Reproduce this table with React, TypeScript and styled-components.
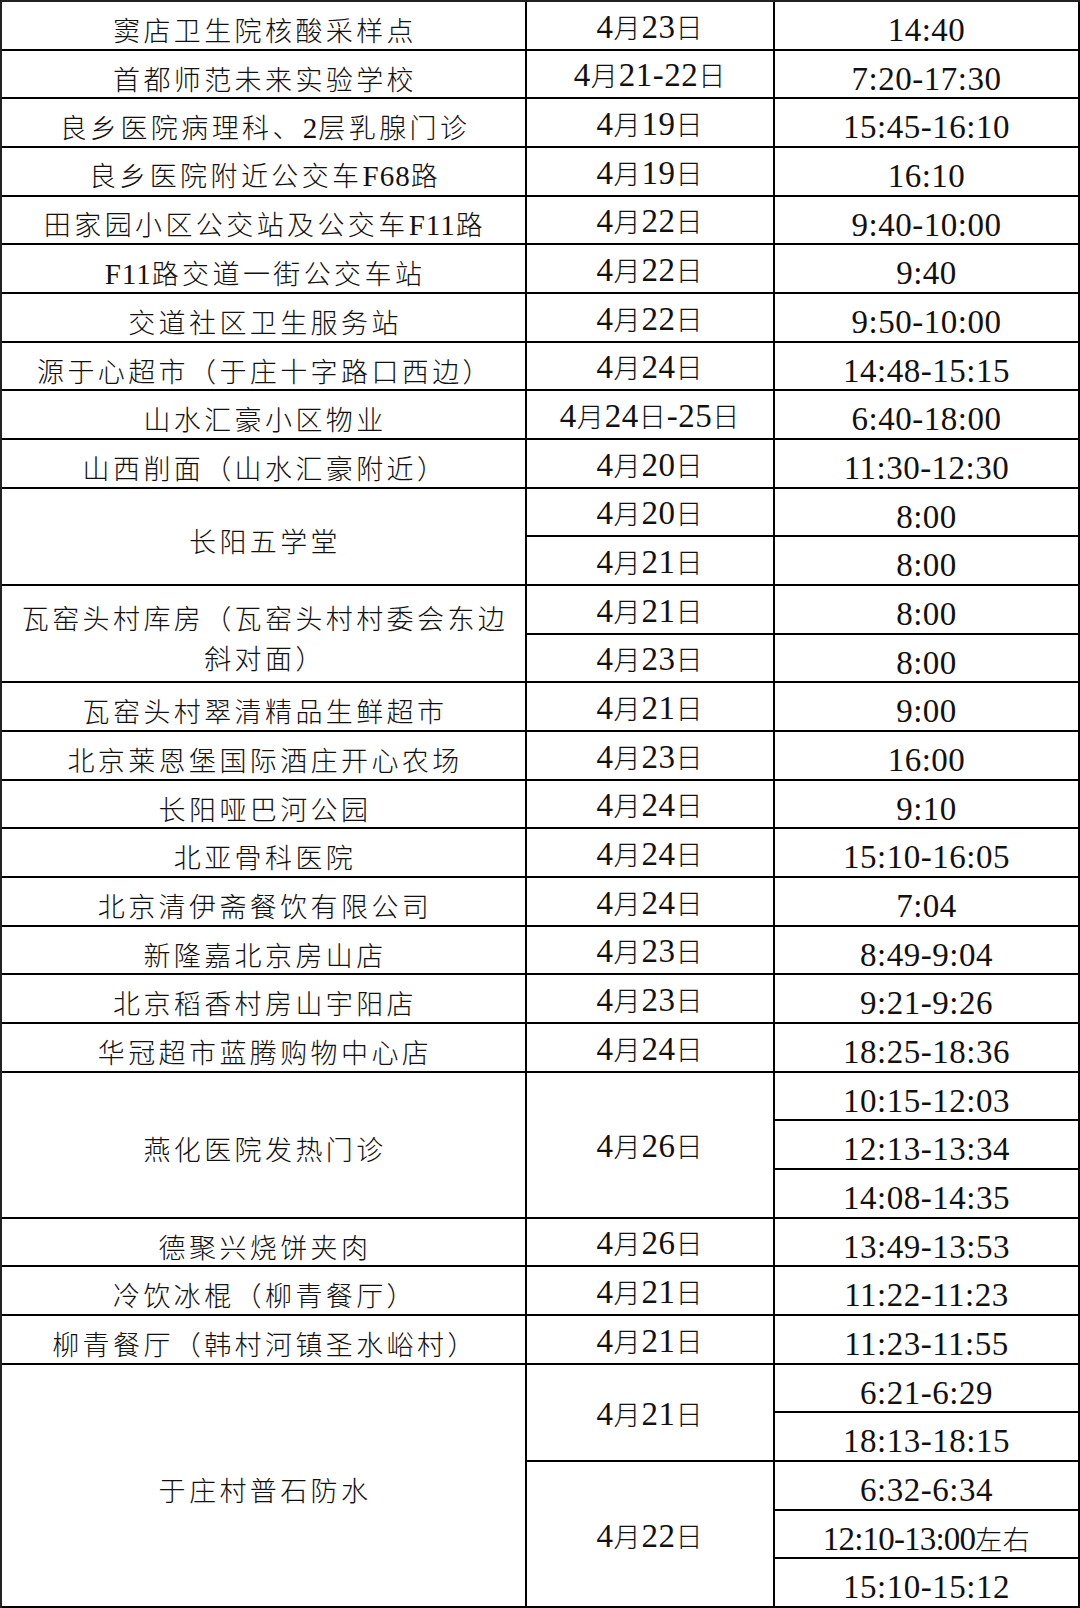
import React from 'react';
import styled, { createGlobalStyle, css } from 'styled-components';

type DateGroup = { date: string; times: string[] };
type Site = { place: string; dates: DateGroup[] };

const one = (place: string, date: string, time: string): Site => ({
  place,
  dates: [{ date, times: [time] }],
});

const sites: Site[] = [
  one('窦店卫生院核酸采样点', '4月23日', '14:40'),
  one('首都师范未来实验学校', '4月21-22日', '7:20-17:30'),
  one('良乡医院病理科、2层乳腺门诊', '4月19日', '15:45-16:10'),
  one('良乡医院附近公交车F68路', '4月19日', '16:10'),
  one('田家园小区公交站及公交车F11路', '4月22日', '9:40-10:00'),
  one('F11路交道一街公交车站', '4月22日', '9:40'),
  one('交道社区卫生服务站', '4月22日', '9:50-10:00'),
  one('源于心超市（于庄十字路口西边）', '4月24日', '14:48-15:15'),
  one('山水汇豪小区物业', '4月24日-25日', '6:40-18:00'),
  one('山西削面（山水汇豪附近）', '4月20日', '11:30-12:30'),
  {
    place: '长阳五学堂',
    dates: [
      { date: '4月20日', times: ['8:00'] },
      { date: '4月21日', times: ['8:00'] },
    ],
  },
  {
    place: '瓦窑头村库房（瓦窑头村村委会东边斜对面）',
    dates: [
      { date: '4月21日', times: ['8:00'] },
      { date: '4月23日', times: ['8:00'] },
    ],
  },
  one('瓦窑头村翠清精品生鲜超市', '4月21日', '9:00'),
  one('北京莱恩堡国际酒庄开心农场', '4月23日', '16:00'),
  one('长阳哑巴河公园', '4月24日', '9:10'),
  one('北亚骨科医院', '4月24日', '15:10-16:05'),
  one('北京清伊斋餐饮有限公司', '4月24日', '7:04'),
  one('新隆嘉北京房山店', '4月23日', '8:49-9:04'),
  one('北京稻香村房山宇阳店', '4月23日', '9:21-9:26'),
  one('华冠超市蓝腾购物中心店', '4月24日', '18:25-18:36'),
  {
    place: '燕化医院发热门诊',
    dates: [{ date: '4月26日', times: ['10:15-12:03', '12:13-13:34', '14:08-14:35'] }],
  },
  one('德聚兴烧饼夹肉', '4月26日', '13:49-13:53'),
  one('冷饮冰棍（柳青餐厅）', '4月21日', '11:22-11:23'),
  one('柳青餐厅（韩村河镇圣水峪村）', '4月21日', '11:23-11:55'),
  {
    place: '于庄村普石防水',
    dates: [
      { date: '4月21日', times: ['6:21-6:29', '18:13-18:15'] },
      { date: '4月22日', times: ['6:32-6:34', '12:10-13:00左右', '15:10-15:12'] },
    ],
  },
];

const rowsOf = (s: Site) => s.dates.reduce((m, d) => m + d.times.length, 0);
const totalRows = sites.reduce((n, s) => n + rowsOf(s), 0);

const isLatin = (s: string) => /^[\x20-\x7E]+$/.test(s);

// latin runs (digits, colons, dashes) are set in a serif face, the rest in CJK
const mixed = (text: string) =>
  text.split(/([\x20-\x7E]+)/).map((part, i) =>
    isLatin(part) ? <Latin key={i}>{part}</Latin> : part,
  );

const App = () => (
  <>
    <GlobalStyle />
    <Sheet style={{ gridTemplateRows: `repeat(${totalRows}, 1fr)` }}>
      {sites.map((site) => (
        <React.Fragment key={site.place}>
          <PlaceCell $span={rowsOf(site)}>
            <Text>{mixed(site.place)}</Text>
          </PlaceCell>
          {site.dates.map((d) => (
            <React.Fragment key={d.date}>
              <DateCell $span={d.times.length}>
                <Text>{mixed(d.date)}</Text>
              </DateCell>
              {d.times.map((t) => (
                // a time with a note after it is squeezed to fit, as in the source sheet
                <TimeCell key={t} $span={1} $tight={!isLatin(t)}>
                  <Text>{mixed(t)}</Text>
                </TimeCell>
              ))}
            </React.Fragment>
          ))}
        </React.Fragment>
      ))}
    </Sheet>
  </>
);

export default App;

const GlobalStyle = createGlobalStyle`
  html, body {
    margin: 0;
    padding: 0;
    background: #fff;
  }
  body {
    font-family: 'Noto Sans CJK SC', sans-serif;
    color: #111;
  }
`;

const Sheet = styled.div`
  box-sizing: border-box;
  width: 1080px;
  height: 1608px;
  display: grid;
  grid-template-columns: 525px 248px 1fr;
  border-top: 2px solid #222;
  border-left: 2px solid #222;
  background: #fff;
`;

const Cell = styled.div<{ $span: number }>`
  grid-row: span ${(p) => p.$span};
  display: flex;
  align-items: center;
  justify-content: center;
  text-align: center;
  box-sizing: border-box;
  border-right: 2px solid #000;
  border-bottom: 2px solid #000;
  padding: 9px 8px 0;
  font-family: 'Noto Sans CJK SC', sans-serif;
  font-weight: 300;
  font-size: 27px;
  line-height: 40px;
  color: #111;
  min-width: 0;
  min-height: 0;
`;

const PlaceCell = styled(Cell)`
  grid-column: 1;
  letter-spacing: 3.4px;
  padding-left: 11px;
  --latin-size: 29px;
  --latin-track: 1px;
`;

const DateCell = styled(Cell)`
  grid-column: 2;
  letter-spacing: 1px;
  padding-top: 3px;
`;

const TimeCell = styled(Cell)<{ $tight?: boolean }>`
  grid-column: 3;
  letter-spacing: 0.5px;
  ${(p) =>
    p.$tight &&
    css`
      --latin-track: -0.8px;
    `}
`;

const Text = styled.span`
  display: block;
`;

const Latin = styled.span`
  font-family: 'Liberation Serif', 'Times New Roman', serif;
  font-weight: 400;
  font-size: var(--latin-size, 33px);
  letter-spacing: var(--latin-track, 0.5px);
  line-height: 40px;
`;
